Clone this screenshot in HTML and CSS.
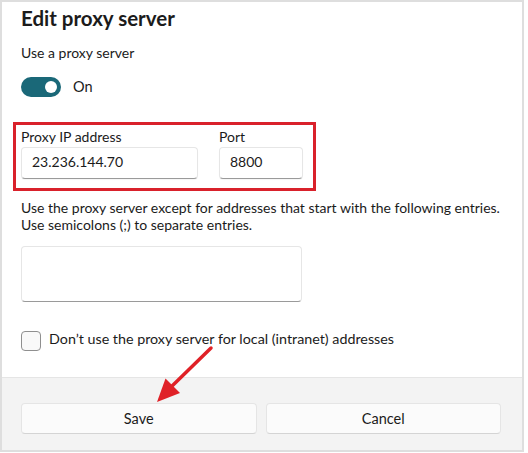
FILE: index.html
```html
<!DOCTYPE html>
<html lang="en">
<head>
<meta charset="utf-8">
<title>Edit proxy server</title>
<link rel="stylesheet" href="styles.css">
</head>
<body>
<div class="window">
  <div class="content">
    <h1 class="title">Edit proxy server</h1>
    <div class="label-main">Use a proxy server</div>
    <div class="toggle-row">
      <span class="toggle"><span class="knob"></span></span>
      <span class="toggle-text">On</span>
    </div>
    <div class="highlight">
      <div class="field ip">
        <div class="field-label">Proxy IP address</div>
        <div class="input">23.236.144.70</div>
      </div>
      <div class="field port">
        <div class="field-label">Port</div>
        <div class="input">8800</div>
      </div>
    </div>
    <p class="desc"><span class="desc-line">Use the proxy server except for addresses that start with the following entries.</span><span class="desc-line">Use semicolons (;) to separate entries.</span></p>
    <div class="textarea"></div>
    <div class="check-row">
      <span class="checkbox"></span>
      <span class="check-text">Don’t use the proxy server for local (intranet) addresses</span>
    </div>
  </div>
  <div class="footer">
    <div class="btn">Save</div>
    <div class="btn">Cancel</div>
  </div>
  <svg class="arrow" width="528" height="453" viewBox="0 0 528 453" aria-hidden="true">
    <line x1="211" y1="348" x2="170" y2="388" stroke="#e02127" stroke-width="3.5" stroke-linecap="round"/>
    <polygon points="157,402 165.5,378.5 180,393" fill="#e02127"/>
  </svg>
</div>
</body>
</html>
```
FILE: styles.css
```css
* { box-sizing: border-box; }
html, body { margin: 0; padding: 0; background: #ffffff; }
body {
  font-family: Lato, "Noto Sans", sans-serif;
  color: #1b1b1b;
  width: 528px;
  height: 453px;
  overflow: hidden;
}
.window {
  position: relative;
  width: 524px;
  height: 452px;
  border: 2px solid #dedede;
  background: #ffffff;
  display: flex;
  flex-direction: column;
}
.content {
  padding: 2px 21px 0 19px;
  height: 375px;
}
.title {
  margin: 0;
  font-size: 20.5px;
  font-weight: 700;
  line-height: 28px;
}
.label-main {
  margin-top: 11px;
  font-size: 14px;
  line-height: 20px;
}
.toggle-row {
  margin-top: 14px;
  display: flex;
  align-items: center;
  gap: 12px;
  height: 20px;
}
.toggle {
  width: 40px;
  height: 20px;
  border-radius: 10px;
  background: #1a6878;
  display: flex;
  align-items: center;
  justify-content: flex-end;
  padding-right: 4px;
}
.knob {
  width: 12px;
  height: 12px;
  border-radius: 50%;
  background: #ffffff;
}
.toggle-text { font-size: 14.5px; line-height: 20px; }
.highlight {
  margin-top: 25px;
  margin-left: -8px;
  width: 303px;
  border: 3px solid #d9212b;
  padding: 2px 10px 9px 5px;
  display: flex;
  gap: 21px;
}
.field-label { font-size: 14px; line-height: 20px; }
.ip { width: 177px; }
.port { width: 84px; }
.input {
  height: 32px;
  border: 1px solid #e6e6e6;
  border-bottom-color: #9a9a9a;
  border-radius: 4px;
  background: #ffffff;
  padding: 4px 10px 0 10px;
  font-size: 14px;
  line-height: 20px;
  box-shadow: 0 1px 1px rgba(0,0,0,0.04);
}
.desc {
  margin: 8px 0 0 0;
  font-size: 14px;
  line-height: 17px;
}
.desc-line {
  display: block;
  white-space: nowrap;
}
.textarea {
  margin-top: 13px;
  width: 281px;
  height: 56px;
  border: 1px solid #e6e6e6;
  border-bottom-color: #9a9a9a;
  border-radius: 4px;
  background: #ffffff;
}
.check-row {
  margin-top: 27px;
  display: flex;
  align-items: center;
  gap: 8px;
}
.checkbox {
  width: 20px;
  height: 20px;
  border: 1px solid #8f8f8f;
  border-radius: 4px;
  background: #f9f9f9;
}
.check-text {
  font-size: 14.3px;
  line-height: 20px;
  margin-bottom: 3px;
}
.footer {
  flex: 1;
  background: #f3f3f3;
  border-top: 1px solid #e5e5e5;
  padding: 25px 21px 0 19px;
  display: flex;
  gap: 9px;
  align-items: flex-start;
}
.btn {
  flex: 1;
  height: 31px;
  background: #fbfbfb;
  border: 1px solid #e5e5e5;
  border-bottom-color: #d4d4d4;
  border-radius: 4px;
  font-size: 14.5px;
  line-height: 20px;
  display: flex;
  align-items: center;
  justify-content: center;
}
.arrow {
  position: absolute;
  left: -2px;
  top: -2px;
  pointer-events: none;
}
```
